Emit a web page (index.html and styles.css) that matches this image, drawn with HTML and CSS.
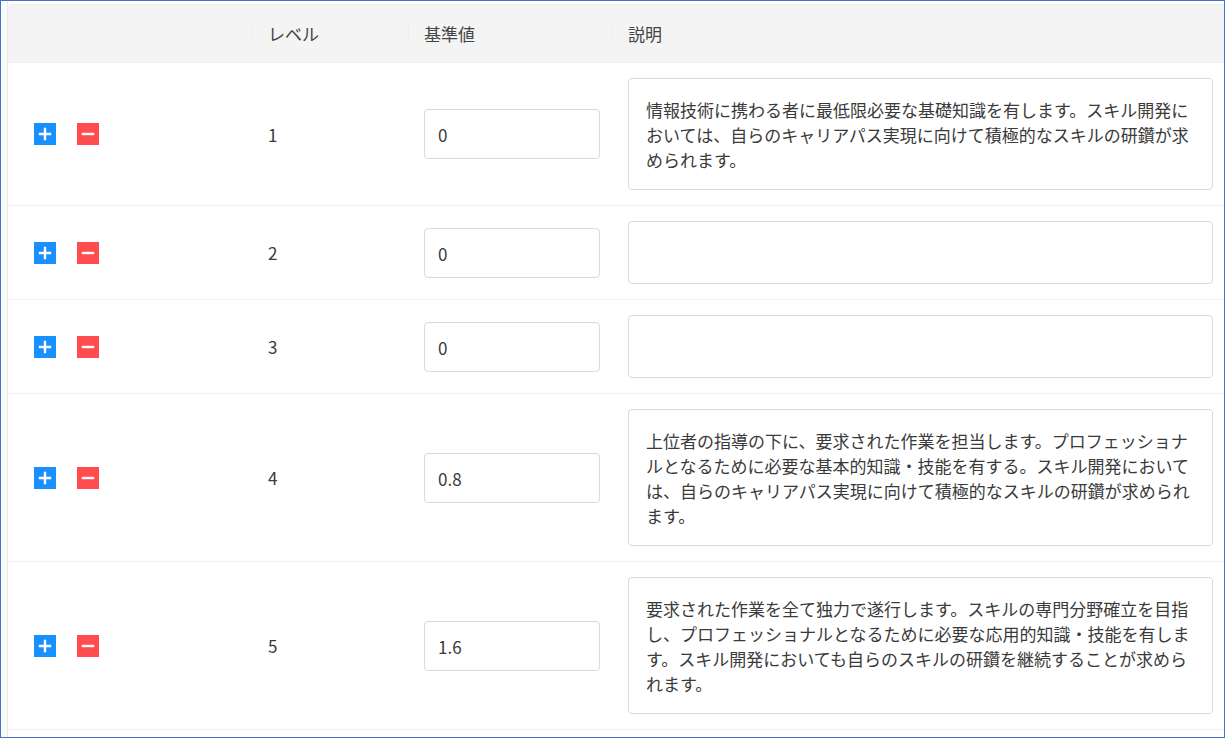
FILE: index.html
```html
<!DOCTYPE html>
<html lang="ja">
<head>
<meta charset="utf-8">
<meta name="viewport" content="width=device-width, initial-scale=1">
<title>レベル設定</title>
<link rel="stylesheet" href="styles.css">
</head>
<body>
<svg class="sprite" aria-hidden="true">
  <symbol id="plus" viewBox="0 0 22 22"><path d="M11 4.8v12.4M4.8 11h12.4" fill="none" stroke="#fff" stroke-width="2.4"/></symbol>
  <symbol id="minus" viewBox="0 0 22 22"><path d="M4.8 11h12.4" fill="none" stroke="#fff" stroke-width="2.4"/></symbol>
</svg>
<main class="panel">
  <table class="levels">
    <thead>
      <tr>
        <th class="col-actions"></th>
        <th class="col-level" scope="col">レベル</th>
        <th class="col-value" scope="col">基準値</th>
        <th class="col-desc" scope="col">説明</th>
      </tr>
    </thead>
    <tbody>
      <tr>
        <td class="col-actions"><div class="actions"><button class="btn add" type="button" aria-label="追加"><svg><use href="#plus"/></svg></button><button class="btn remove" type="button" aria-label="削除"><svg><use href="#minus"/></svg></button></div></td>
        <td class="col-level">1</td>
        <td class="col-value"><input class="value" type="text" aria-label="基準値" value="0"></td>
        <td class="col-desc"><textarea class="desc" rows="3" aria-label="説明">情報技術に携わる者に最低限必要な基礎知識を有します。スキル開発においては、自らのキャリアパス実現に向けて積極的なスキルの研鑽が求められます。</textarea></td>
      </tr>
      <tr>
        <td class="col-actions"><div class="actions"><button class="btn add" type="button" aria-label="追加"><svg><use href="#plus"/></svg></button><button class="btn remove" type="button" aria-label="削除"><svg><use href="#minus"/></svg></button></div></td>
        <td class="col-level">2</td>
        <td class="col-value"><input class="value" type="text" aria-label="基準値" value="0"></td>
        <td class="col-desc"><textarea class="desc" rows="1" aria-label="説明"></textarea></td>
      </tr>
      <tr>
        <td class="col-actions"><div class="actions"><button class="btn add" type="button" aria-label="追加"><svg><use href="#plus"/></svg></button><button class="btn remove" type="button" aria-label="削除"><svg><use href="#minus"/></svg></button></div></td>
        <td class="col-level">3</td>
        <td class="col-value"><input class="value" type="text" aria-label="基準値" value="0"></td>
        <td class="col-desc"><textarea class="desc" rows="1" aria-label="説明"></textarea></td>
      </tr>
      <tr>
        <td class="col-actions"><div class="actions"><button class="btn add" type="button" aria-label="追加"><svg><use href="#plus"/></svg></button><button class="btn remove" type="button" aria-label="削除"><svg><use href="#minus"/></svg></button></div></td>
        <td class="col-level">4</td>
        <td class="col-value"><input class="value" type="text" aria-label="基準値" value="0.8"></td>
        <td class="col-desc"><textarea class="desc" rows="4" aria-label="説明">上位者の指導の下に、要求された作業を担当します。プロフェッショナルとなるために必要な基本的知識・技能を有する。スキル開発においては、自らのキャリアパス実現に向けて積極的なスキルの研鑽が求められます。</textarea></td>
      </tr>
      <tr>
        <td class="col-actions"><div class="actions"><button class="btn add" type="button" aria-label="追加"><svg><use href="#plus"/></svg></button><button class="btn remove" type="button" aria-label="削除"><svg><use href="#minus"/></svg></button></div></td>
        <td class="col-level">5</td>
        <td class="col-value"><input class="value" type="text" aria-label="基準値" value="1.6"></td>
        <td class="col-desc"><textarea class="desc" rows="4" aria-label="説明">要求された作業を全て独力で遂行します。スキルの専門分野確立を目指し、プロフェッショナルとなるために必要な応用的知識・技能を有します。スキル開発においても自らのスキルの研鑽を継続することが求められます。</textarea></td>
      </tr>
    </tbody>
  </table>
</main>
</body>
</html>
```

FILE: styles.css
```css
* {
  box-sizing: border-box;
}

body {
  display: flex;
  min-height: 100vh;
  margin: 0;
  padding-left: 6px;
  border: 1px solid #4472c4;
  background: #f9fafc;
  color: #3a3a3a;
  font: 17px/25px "Noto Sans CJK JP", sans-serif;
}

.sprite {
  display: none;
}

.panel {
  flex: 1;
  padding-top: 3px;
  border-left: 1px solid #ebecee;
  background: #fff;
}

.levels {
  width: 100%;
  table-layout: fixed;
  border-collapse: separate;
  border-spacing: 0;
}

.levels th {
  height: 59px;
  padding: 0 16px;
  border: solid #eee;
  border-width: 1px 0;
  background: #f4f4f4 linear-gradient(#eee, #eee) no-repeat left center / 1px 20px;
  color: #444;
  font-weight: 400;
  text-align: left;
}

.levels th:first-child {
  border-top-left-radius: 4px;
  background-image: none;
}

.levels td {
  padding: 15px 16px;
  border-bottom: 1px solid #f2f2f2;
  vertical-align: middle;
}

.levels .col-actions {
  width: 244px;
  padding-left: 26px;
}

.levels .col-level {
  width: 156px;
}

.levels .col-value {
  width: 204px;
  padding-right: 12px;
}

.levels .col-desc {
  padding-right: 11px;
}

.actions {
  display: flex;
  gap: 21px;
}

.btn {
  width: 22px;
  height: 22px;
  padding: 0;
  border: 0;
  cursor: pointer;
}

.btn svg {
  display: block;
  width: 22px;
  height: 22px;
}

.add {
  background: #1890ff;
}

.remove {
  background: #ff4d4f;
}

.value,
.desc {
  display: block;
  width: 100%;
  margin: 0;
  border: 1px solid #d9d9d9;
  border-radius: 4px;
  background: #fff;
  color: inherit;
  font: inherit;
}

.value {
  height: 50px;
  padding: 1px 13px 0;
}

.desc {
  min-height: 63px;
  padding: 18px 17px 17px;
  overflow: hidden;
  resize: none;
  field-sizing: content;
}
```
